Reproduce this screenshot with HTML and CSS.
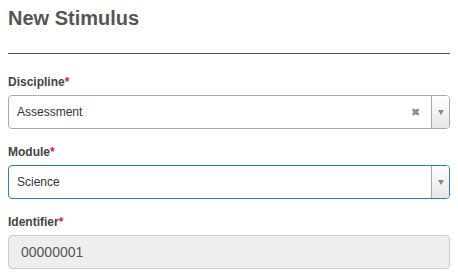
FILE: index.html
```html
<!DOCTYPE html>
<html>
<head>
<meta charset="utf-8">
<link rel="stylesheet" href="styles.css">
</head>
<body>
<div class="page">
  <h2 class="title">New Stimulus</h2>
  <hr class="divider">
  <div class="field">
    <label class="label">Discipline<span class="req">*</span></label>
    <div class="select">
      <span class="value">Assessment</span>
      <span class="clear">&#x2716;</span>
      <span class="arrow"><span class="caret"></span></span>
    </div>
  </div>
  <div class="field">
    <label class="label">Module<span class="req">*</span></label>
    <div class="select focus">
      <span class="value">Science</span>
      <span class="arrow"><span class="caret"></span></span>
    </div>
  </div>
  <div class="field">
    <label class="label">Identifier<span class="req">*</span></label>
    <div class="input disabled">00000001</div>
  </div>
</div>
</body>
</html>
```
FILE: styles.css
```css
* { box-sizing: border-box; }
html, body { margin: 0; padding: 0; background: #fff; }
body { font-family: "Liberation Sans", Arial, sans-serif; color: #333; }
.page { padding: 0 8px; }
.title {
  margin: 0;
  padding-top: 6px;
  font-size: 20px;
  line-height: 24px;
  font-weight: bold;
  color: #555;
}
.divider {
  margin: 23px 0 0 0;
  border: 0;
  border-top: 1px solid #555;
  height: 0;
}
.field { display: flex; flex-direction: column; }
.label {
  font-size: 12px;
  font-weight: bold;
  color: #444;
  line-height: 14px;
  margin-top: 21px;
  margin-bottom: 6px;
}
.field + .field .label { margin-top: 16px; }
.req { color: #c7254e; }
.select {
  display: flex;
  align-items: center;
  height: 34px;
  border: 1px solid #aaa;
  border-radius: 4px;
  background: #fff;
  font-size: 12px;
  overflow: hidden;
}
.select.focus { border-color: #2a7ccf; }
.value { flex: 1; padding-left: 8px; color: #333; }
.clear { font-size: 11px; color: #888; width: 18px; text-align: center; margin-right: 7px; }
.arrow {
  width: 18px;
  align-self: stretch;
  border-left: 1px solid #aaa;
  background: linear-gradient(#fff, #e6e6e6);
  display: flex;
  align-items: center;
  justify-content: center;
}
.caret {
  width: 0; height: 0;
  border-left: 3px solid transparent;
  border-right: 3px solid transparent;
  border-top: 5px solid #888;
}
.input {
  height: 34px;
  border: 1px solid #ccc;
  border-radius: 4px;
  background: #eee;
  font-size: 14px;
  color: #555;
  padding-left: 12px;
  display: flex;
  align-items: center;
}
```
